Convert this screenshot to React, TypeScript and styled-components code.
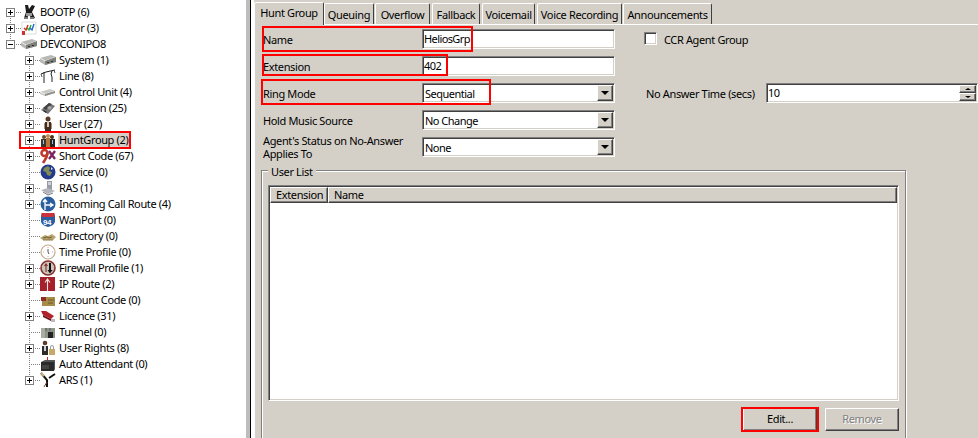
import React from 'react';
import styled, { createGlobalStyle } from 'styled-components';

const Global = createGlobalStyle`
  html, body { margin: 0; padding: 0; background: #fff; }
  * { box-sizing: border-box; }
`;

const FONT = `"Noto Sans", Tahoma, sans-serif`;
const FACE = '#d4d0c8';

const Page = styled.div`
  position: relative;
  display: flex;
  width: 978px;
  height: 438px;
  overflow: hidden;
  font: 11px/16px ${FONT};
  letter-spacing: -0.36px;
  color: #000;
  background: #fff;
`;
const TreePane = styled.div`
  width: 246px;
  flex: none;
  padding-top: 4px;
  background: #fff;
`;
const Sash = styled.div`
  width: 8px;
  flex: none;
  background: #fff;
  border-left: 4px solid #bdbdbd;
  box-shadow: inset 1px 0 0 #000;
`;
const TreeRow = styled.div<{ $depth: number }>`
  display: flex;
  align-items: center;
  height: 16px;
  padding-left: ${p => (p.$depth ? 25 : 6)}px;
`;
const DOTS_V = 'repeating-linear-gradient(to bottom, #808080 0 1px, transparent 1px 2px)';
const DOTS_H = 'repeating-linear-gradient(to right, #808080 0 1px, transparent 1px 2px)';
const Elbow = styled.div<{ $up: boolean; $down: boolean }>`
  position: relative;
  width: 15px;
  height: 16px;
  flex: none;
  &::before {
    content: '';
    position: absolute;
    left: 4px;
    width: 1px;
    top: ${p => (p.$up ? 0 : 8)}px;
    bottom: ${p => (p.$down ? 0 : 8)}px;
    background: ${DOTS_V};
  }
  &::after {
    content: '';
    position: absolute;
    left: 4px;
    right: 0;
    top: 8px;
    height: 1px;
    background: ${DOTS_H};
  }
`;
const ExpandBox = styled.span`
  position: absolute;
  z-index: 1;
  left: 0;
  top: 4px;
  width: 9px;
  height: 9px;
  background: #fff;
  border: 1px solid #808080;
  &::before {
    content: '';
    position: absolute;
    left: 1px;
    top: 3px;
    width: 5px;
    height: 1px;
    background: #000;
  }
`;
const PlusBox = styled(ExpandBox)`
  &::after {
    content: '';
    position: absolute;
    left: 3px;
    top: 1px;
    width: 1px;
    height: 5px;
    background: #000;
  }
`;
const TreeIcon = styled.svg`
  width: 16px;
  height: 16px;
  flex: none;
  margin-right: 3px;
  overflow: hidden;
`;
const IconLabel = styled.text`
  font: bold 8px "Liberation Sans", sans-serif;
`;
const NodeText = styled.span<{ $selected?: boolean }>`
  white-space: nowrap;
  margin-left: -1px;
  padding: 0 1px;
  height: 16px;
  background: ${p => (p.$selected ? FACE : 'transparent')};
`;

const RightPane = styled.div`
  flex: 1;
  min-width: 0;
  display: flex;
  flex-direction: column;
  background: ${FACE};
`;
const TabStrip = styled.div`
  display: flex;
  align-items: flex-end;
  height: 25px;
  flex: none;
  border-bottom: 1px solid #fff;
`;
const Tab = styled.div<{ $w: number; $active?: boolean; $gap?: number }>`
  width: ${p => p.$w}px;
  height: ${p => (p.$active ? 23 : 21)}px;
  margin-right: ${p => p.$gap ?? 2}px;
  margin-bottom: ${p => (p.$active ? -1 : 0)}px;
  padding: ${p => (p.$active ? 2 : 3)}px 0 0;
  text-align: center;
  white-space: nowrap;
  position: relative;
  background: ${FACE};
  border: 1px solid;
  border-color: #fff #404040 transparent #fff;
  border-bottom: 0;
  border-radius: 2px 2px 0 0;
`;
const TabBody = styled.div`
  flex: 1;
  padding: 4px 0 0 7px;
  border-left: 1px solid #fff;
  min-height: 0;
`;
const FormGrid = styled.div`
  display: grid;
  grid-template-columns: 159px 193px 31px 120px 212px;
  grid-auto-rows: 20px;
  row-gap: 7px;
  margin-left: 1px;
  align-items: center;
`;
const FieldLabel = styled.div`
  line-height: 16px;
  padding-top: 2px;
  white-space: nowrap;
`;
const WrappedLabel = styled.div`
  line-height: 13px;
  white-space: nowrap;
`;
const Sunken = styled.div`
  height: 20px;
  position: relative;
  display: flex;
  align-items: center;
  background: #fff;
  border: 1px solid;
  border-color: #808080 #fff #fff #808080;
  box-shadow: inset 1px 1px 0 #404040, inset -1px -1px 0 ${FACE};
  white-space: nowrap;
`;
const TextField = styled(Sunken)`
  padding-left: 1px;
  letter-spacing: -0.6px;
`;
const Combo = styled(Sunken)`
  padding: 2px 0 0 2px;
  letter-spacing: -0.5px;
`;
const Raised = styled.div`
  background: ${FACE};
  border: 1px solid;
  border-color: #fff #404040 #404040 #fff;
  box-shadow: inset -1px -1px 0 #808080;
`;
const ComboArrow = styled(Raised)`
  position: absolute;
  right: 1px;
  top: 1px;
  width: 16px;
  height: 16px;
  &::after {
    content: '';
    position: absolute;
    left: 3px;
    top: 5px;
    border: 4px solid transparent;
    border-top: 4px solid #000;
    border-bottom: 0;
  }
`;
const SpinStack = styled.div`
  position: absolute;
  right: 1px;
  top: 1px;
  width: 17px;
  height: 16px;
  display: flex;
  flex-direction: column;
`;
const SpinButton = styled(Raised)<{ $down?: boolean }>`
  position: relative;
  height: 8px;
  &::after {
    content: '';
    position: absolute;
    left: 5px;
    top: 2px;
    border: 3px solid transparent;
    ${p => (p.$down ? 'border-top: 2px solid #000; border-bottom: 0;' : 'border-bottom: 2px solid #000; border-top: 0;')}
  }
`;
const CheckCell = styled.div`
  grid-column: 3 / span 3;
  display: flex;
  align-items: center;
  padding-left: 29px;
  gap: 7px;
`;
const CheckBox = styled.span`
  width: 13px;
  height: 13px;
  margin-top: -1px;
  background: #fff;
  border: 1px solid;
  border-color: #808080 #fff #fff #808080;
  box-shadow: inset 1px 1px 0 #404040, inset -1px -1px 0 ${FACE};
`;
const CheckText = styled.span`
  padding-top: 2px;
`;

const Group = styled.div`
  position: relative;
  width: 645px;
  height: 270px;
  margin-top: 13px;
  margin-left: -1px;
  padding: 14px 6px 0 6px;
  border: 1px solid #808080;
  box-shadow: inset 1px 1px 0 #fff, 1px 1px 0 #fff;
`;
const Legend = styled.span`
  position: absolute;
  top: -8px;
  left: 6px;
  padding: 0 3px;
  line-height: 18px;
  background: ${FACE};
`;
const ListBox = styled.div`
  height: 216px;
  background: #fff;
  border: 1px solid;
  border-color: #808080 #fff #fff #808080;
  box-shadow: inset 1px 1px 0 #404040, inset -1px -1px 0 ${FACE};
  padding: 1px 1px 0 1px;
`;
const HeaderRow = styled.div`
  display: flex;
  height: 16px;
`;
const HeaderCell = styled(Raised)<{ $w?: number }>`
  ${p => (p.$w ? `width: ${p.$w}px; flex: none;` : 'flex: 1;')}
  padding-left: 5px;
  line-height: 14px;
`;
const ButtonRow = styled.div`
  display: flex;
  justify-content: flex-end;
  gap: 8px;
  margin-top: 7px;
`;
const PushButton = styled(Raised)<{ $disabled?: boolean }>`
  width: 74px;
  height: 23px;
  text-align: center;
  line-height: 20px;
  color: ${p => (p.$disabled ? '#808080' : '#000')};
  text-shadow: ${p => (p.$disabled ? '1px 1px 0 #fff' : 'none')};
`;
const Highlight = styled.div<{ $x: number; $y: number; $w: number; $h: number }>`
  position: absolute;
  left: ${p => p.$x}px;
  top: ${p => p.$y}px;
  width: ${p => p.$w}px;
  height: ${p => p.$h}px;
  border: 2px solid #f00;
  pointer-events: none;
`;

const drawings: Record<string, React.ReactNode> = {
  boot: (<><path d="M4 1l3 0 1 4 3-4 3 1-3 6 3 6-3 1-3-4-3 4-2-1 2-6z" fill="#1c1c1c" /><path d="M5 9h6v3H5z" fill="#9a9a9a" /><path d="M3 13h4v2H3zM9 13h4v2H9z" fill="#777" /></>),
  operator: (<><path d="M1 2h14v12H1z" fill="#fff" stroke="#ddd" /><path d="M3 8l2 2 2-5" fill="none" stroke="#d22" strokeWidth="1.4" /><path d="M6 8l2 2 2-5" fill="none" stroke="#2a3" strokeWidth="1.4" /><path d="M9 8l2 2 2-6" fill="none" stroke="#26c" strokeWidth="1.4" /><path d="M1 11h3v4H1z" fill="#c33" /></>),
  rack: (<><path d="M0 6l11-3 5 2v5L5 13 0 10z" fill="#b8b8b4" /><path d="M0 6l5 3 11-4" fill="none" stroke="#eee" /><path d="M5 9v4l11-3V5z" fill="#7d7d7a" /><path d="M7 10h2v1H7zM11 9h2v1h-2z" fill="#333" /></>),
  line: (<><path d="M1 6l5-2 9-2M4 4v11M12 3l-1 3 1 3v5" fill="none" stroke="#222" /><path d="M1 6l1 3M14 2l1 3" stroke="#555" /></>),
  control: (<><path d="M0 8l10-3 5 2v2L5 12 0 10z" fill="#c8c8c4" /><path d="M0 8l5 2 10-3" fill="none" stroke="#eee" /><path d="M5 10v2l10-3V7z" fill="#8f8f8c" /></>),
  phone: (<><path d="M1 10l8-7 6 3-7 8z" fill="#777" /><path d="M3 8l6-5 3 1-6 6z" fill="#444" /><path d="M7 8l2-2 3 1-2 3z" fill="#aaa" /><path d="M3 11l3 2 1-1-3-2z" fill="#333" /></>),
  user: (<><circle cx="8" cy="3" r="2.5" fill="#5a3b26" /><path d="M5 6h6v9H5z" fill="#3a2e2a" /><path d="M7 6h2v5H7z" fill="#d9c7b0" /><path d="M4 7h1v6H4zM11 7h1v6h-1z" fill="#b08d6a" /></>),
  hunt: (<><circle cx="4" cy="5" r="2" fill="#6a4a30" /><circle cx="12" cy="5" r="2" fill="#4a3220" /><circle cx="8" cy="4" r="2" fill="#c48a50" /><path d="M1 7h6v8H1z" fill="#3f342c" /><path d="M9 7h6v8H9z" fill="#2a2522" /><path d="M6 6h4v9H6z" fill="#b5783e" /><path d="M3 8h1v4H3zM12 8h1v4h-1z" fill="#9dc0d8" /></>),
  code: (<><circle cx="4.5" cy="5" r="3" fill="none" stroke="#c0392b" strokeWidth="2.6" /><path d="M7.5 5C7 10 5 12 3 15" fill="none" stroke="#c0392b" strokeWidth="2.6" /><path d="M9 3l6 8M15 3l-6 8" stroke="#7b2560" strokeWidth="2.4" /></>),
  globe: (<><circle cx="8" cy="8" r="7.5" fill="#243a8c" /><path d="M4 4l4-2 2 2-1 3 3 1-2 4-3-1-1-3-3-1z" fill="#7f8a55" /><path d="M11 3l2 2-2 1z" fill="#dde" /></>),
  ras: (<><path d="M7 1h5v9H7z" fill="#9a9aa6" /><path d="M8 2h3v3H8z" fill="#cfd0d8" /><path d="M1 10l7-2 7 3-7 3z" fill="#b4b4bc" /><path d="M3 12l5 3 5-2" fill="none" stroke="#777" /></>),
  route: (<><circle cx="8" cy="8" r="7.5" fill="#2a5ea0" /><path d="M5 14V4M3 6l2-2.5L7 6M5 9h7M10 7l3 2-3 2" fill="none" stroke="#fff" strokeWidth="1.3" /></>),
  wan: (<><path d="M2 1h12l1 3v5c0 3-3 5-7 6-4-1-7-3-7-6V4z" fill="#2a5ea0" /><path d="M1.5 1h13v4h-13z" fill="#c8323a" /><IconLabel x="3" y="13" fill="#fff">94</IconLabel></>),
  directory: (<><path d="M0 10l5-3 3 1 4-2 4 3-3 3H3z" fill="#b9a36e" /><path d="M3 10l4-1 2 1 3-1" fill="none" stroke="#6f5e38" /><path d="M3 12h10" stroke="#8a7747" /></>),
  clock: (<><circle cx="8" cy="8" r="7" fill="#fff" stroke="#c2ae8c" strokeWidth="1.2" /><path d="M8 3v1M8 12v1M3 8h1M12 8h1" stroke="#b39" strokeOpacity=".5" /><path d="M8 5v3l1 2" fill="none" stroke="#555" /></>),
  firewall: (<><circle cx="8" cy="8" r="7" fill="#c9c5bb" stroke="#8b2f2c" strokeWidth="1.6" /><path d="M6 4v8M4.5 6L6 4l1.5 2" fill="none" stroke="#8b2f2c" strokeWidth="1.1" /><path d="M10 3v9" stroke="#111" strokeWidth="2" /><path d="M7.5 10h5L10 13.5z" fill="#111" /></>),
  iproute: (<><path d="M0 1h15v14H0z" fill="#a5202a" /><path d="M7.5 4v11M5 6.5L7.5 3 10 6.5" fill="none" stroke="#f3e6e0" strokeWidth="1.1" /></>),
  account: (<><path d="M2 5h13v9H2z" fill="#a68e4a" /><path d="M1 5h5v4H1z" fill="#8e2b22" /><path d="M8 8h6M8 11h5" stroke="#6a5a2c" /></>),
  licence: (<><path d="M1 3l5 0 8 5-3 3-8-4z" fill="#b2222c" /><path d="M3 7l8 4v2l-8-4z" fill="#6f1218" /><path d="M11 11h4v3h-4z" fill="#bbb" /></>),
  tunnel: (<><path d="M1 4h14v10H1z" fill="#8f948a" /><path d="M1 4h4v10H1z" fill="#a8ada2" /><path d="M8 8h5v6H8z" fill="#222" /><path d="M6 4v3M10 4v3" stroke="#555" /></>),
  rights: (<><circle cx="5" cy="3" r="2.3" fill="#5a3b26" /><path d="M2 6h6v9H2z" fill="#2e2a28" /><path d="M4 6h2v5H4z" fill="#ccd" /><path d="M9 9h6v6H9z" fill="#c9a96a" /><path d="M10.5 9V7a1.5 1.5 0 0 1 3 0v2" fill="none" stroke="#999" /></>),
  mailbox: (<><path d="M1 6h13v9H1z" fill="#2a2a2a" /><path d="M1 6l4-2h10v9l-1 2V6z" fill="#555" /><path d="M2 9h7v4H2z" fill="#444" /><path d="M7 1h1v3H7z" fill="#d22" /></>),
  ars: (<><path d="M9 6l6-4M7 15V8L1 1" fill="none" stroke="#111" strokeWidth="2" /><path d="M1 1l3 3" stroke="#cdb78e" strokeWidth="2" /><path d="M4 15l3-5" stroke="#7a3a2a" /></>),
};

type Node = { name: string; icon: string; plus?: boolean; selected?: boolean };
const roots: (Node & { up: boolean; down: boolean; open?: boolean })[] = [
  { name: 'BOOTP (6)', icon: 'boot', plus: true, up: false, down: true },
  { name: 'Operator (3)', icon: 'operator', plus: true, up: true, down: true },
  { name: 'DEVCONIPO8', icon: 'rack', plus: true, open: true, up: true, down: false },
];
const children: Node[] = [
  { name: 'System (1)', icon: 'rack', plus: true },
  { name: 'Line (8)', icon: 'line', plus: true },
  { name: 'Control Unit (4)', icon: 'control', plus: true },
  { name: 'Extension (25)', icon: 'phone', plus: true },
  { name: 'User (27)', icon: 'user', plus: true },
  { name: 'HuntGroup (2)', icon: 'hunt', plus: true, selected: true },
  { name: 'Short Code (67)', icon: 'code', plus: true },
  { name: 'Service (0)', icon: 'globe' },
  { name: 'RAS (1)', icon: 'ras', plus: true },
  { name: 'Incoming Call Route (4)', icon: 'route', plus: true },
  { name: 'WanPort (0)', icon: 'wan' },
  { name: 'Directory (0)', icon: 'directory' },
  { name: 'Time Profile (0)', icon: 'clock' },
  { name: 'Firewall Profile (1)', icon: 'firewall', plus: true },
  { name: 'IP Route (2)', icon: 'iproute', plus: true },
  { name: 'Account Code (0)', icon: 'account' },
  { name: 'Licence (31)', icon: 'licence', plus: true },
  { name: 'Tunnel (0)', icon: 'tunnel' },
  { name: 'User Rights (8)', icon: 'rights', plus: true },
  { name: 'Auto Attendant (0)', icon: 'mailbox' },
  { name: 'ARS (1)', icon: 'ars', plus: true },
];

const tabs = [
  { label: 'Hunt Group', w: 70, active: true, gap: 0 },
  { label: 'Queuing', w: 50, gap: 1 },
  { label: 'Overflow', w: 55, gap: 2 },
  { label: 'Fallback', w: 48, gap: 2 },
  { label: 'Voicemail', w: 53, gap: 2 },
  { label: 'Voice Recording', w: 85, gap: 1 },
  { label: 'Announcements', w: 89, gap: 0 },
];

const Icon = ({ kind }: { kind: string }) => (
  <TreeIcon viewBox="0 0 16 16">{drawings[kind]}</TreeIcon>
);

export default function App() {
  return (
    <Page>
      <Global />
      <TreePane>
        {roots.map(n => (
          <TreeRow key={n.name} $depth={0}>
            <Elbow $up={n.up} $down={n.down}>
              {n.open ? <ExpandBox /> : <PlusBox />}
            </Elbow>
            <Icon kind={n.icon} />
            <NodeText>{n.name}</NodeText>
          </TreeRow>
        ))}
        {children.map((n, i) => (
          <TreeRow key={n.name} $depth={1}>
            <Elbow $up $down={i < children.length - 1}>
              {n.plus && <PlusBox />}
            </Elbow>
            <Icon kind={n.icon} />
            <NodeText $selected={n.selected}>{n.name}</NodeText>
          </TreeRow>
        ))}
      </TreePane>
      <Sash />
      <RightPane>
        <TabStrip>
          {tabs.map(t => (
            <Tab key={t.label} $w={t.w} $active={t.active} $gap={t.gap}>{t.label}</Tab>
          ))}
        </TabStrip>
        <TabBody>
          <FormGrid>
            <FieldLabel>Name</FieldLabel>
            <TextField>HeliosGrp</TextField>
            <CheckCell><CheckBox /><CheckText>CCR Agent Group</CheckText></CheckCell>

            <FieldLabel>Extension</FieldLabel>
            <TextField>402</TextField>
            <span />
            <span />
            <span />

            <FieldLabel>Ring Mode</FieldLabel>
            <Combo>Sequential<ComboArrow /></Combo>
            <span />
            <FieldLabel>No Answer Time (secs)</FieldLabel>
            <TextField>10<SpinStack><SpinButton /><SpinButton $down /></SpinStack></TextField>

            <FieldLabel>Hold Music Source</FieldLabel>
            <Combo>No Change<ComboArrow /></Combo>
            <span />
            <span />
            <span />

            <WrappedLabel>Agent's Status on No-Answer<br />Applies To</WrappedLabel>
            <Combo>None<ComboArrow /></Combo>
          </FormGrid>
          <Group>
            <Legend>User List</Legend>
            <ListBox>
              <HeaderRow>
                <HeaderCell $w={58}>Extension</HeaderCell>
                <HeaderCell>Name</HeaderCell>
              </HeaderRow>
            </ListBox>
            <ButtonRow>
              <PushButton>Edit...</PushButton>
              <PushButton $disabled>Remove</PushButton>
            </ButtonRow>
          </Group>
        </TabBody>
      </RightPane>
      <Highlight $x={19} $y={131} $w={112} $h={18} />
      <Highlight $x={262} $y={26} $w={211} $h={26} />
      <Highlight $x={262} $y={54} $w={186} $h={22} />
      <Highlight $x={261} $y={79} $w={230} $h={26} />
      <Highlight $x={741} $y={407} $w={78} $h={25} />
    </Page>
  );
}
